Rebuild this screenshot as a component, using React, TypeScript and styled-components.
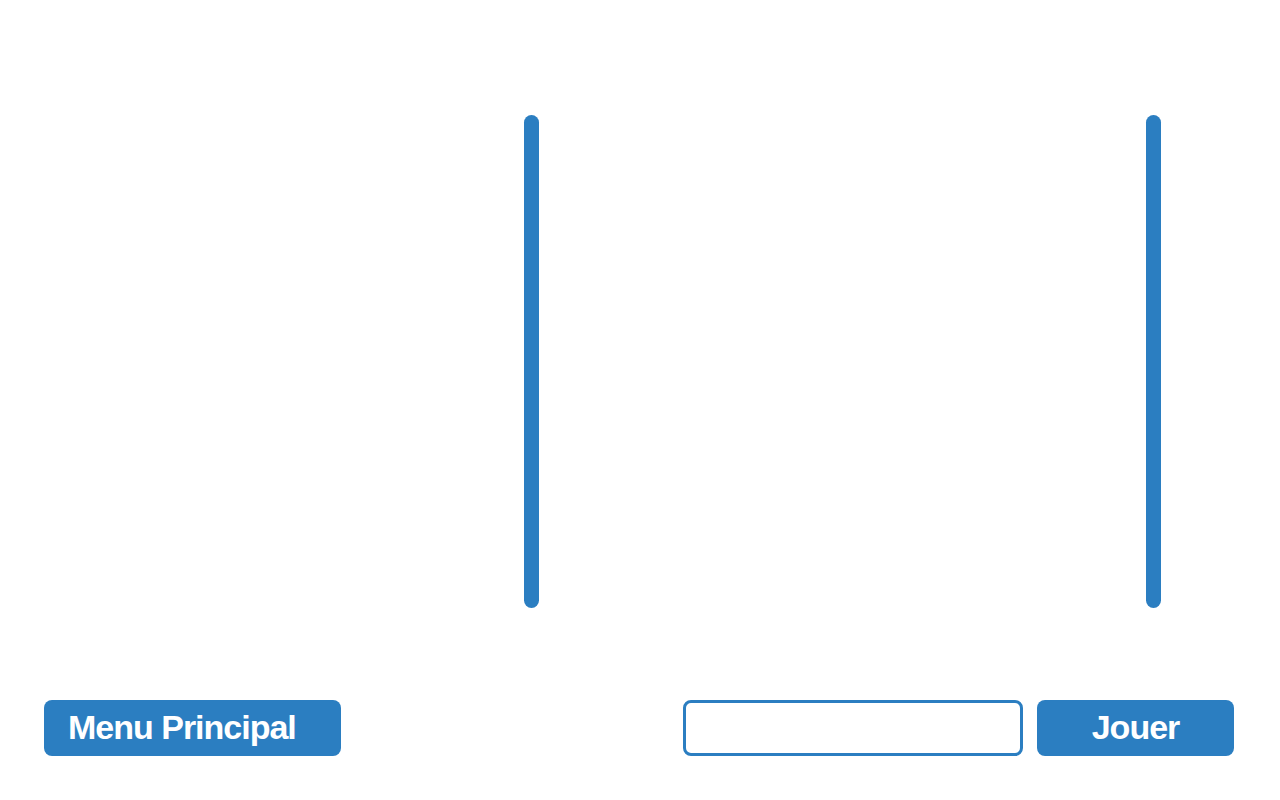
import styled, { createGlobalStyle } from "styled-components";

const GlobalStyle = createGlobalStyle`
  html, body {
    margin: 0;
    padding: 0;
    background: #ffffff;
  }
  body {
    font-family: 'Liberation Sans', Arial, sans-serif;
  }
`

const blue = '#2b7ec1'

const App = () => {
  return (
    <Wrapper>
      <GlobalStyle />
      <Board>
        <Zone width={480} />
        <Divider />
        <Zone width={607} />
        <Divider />
        <Zone width={75} />
      </Board>

      <Footer>
        <Button width={297} align="left">Menu Principal</Button>
        <Actions>
          <Field type="text" />
          <Button width={197} align="center">Jouer</Button>
        </Actions>
      </Footer>
    </Wrapper>
  )
}

const Wrapper = styled.div`
  width: 1280px;
  height: 800px;
  padding: 115px 46px 0 44px;
  box-sizing: border-box;
`

const Board = styled.div`
  display: flex;
  height: 493px;
`

const Zone = styled.div<{ width: number }>`
  width: ${p => p.width}px;
  flex-shrink: 0;
`

const Divider = styled.div`
  width: 15px;
  flex-shrink: 0;
  background: ${blue};
  border-radius: 8px;
`

const Footer = styled.div`
  display: flex;
  justify-content: space-between;
  align-items: center;
  margin-top: 92px;
  height: 56px;
`

const Actions = styled.div`
  display: flex;
  gap: 14px;
  height: 100%;
`

const Button = styled.button<{ width: number, align: 'left' | 'center' }>`
  width: ${p => p.width}px;
  height: 56px;
  border: none;
  border-radius: 8px;
  background: ${blue};
  color: #ffffff;
  font-family: 'Liberation Sans', Arial, sans-serif;
  font-weight: 700;
  font-size: 34px;
  line-height: 1;
  letter-spacing: -1px;
  text-align: ${p => p.align};
  padding: ${p => p.align === 'left' ? '0 0 2px 24px' : '0 0 2px 0'};
  cursor: pointer;
`

const Field = styled.input`
  width: 340px;
  height: 56px;
  box-sizing: border-box;
  border: 3px solid ${blue};
  border-radius: 8px;
  outline: none;
  font-size: 24px;
  padding: 0 12px;
`

export default App;
